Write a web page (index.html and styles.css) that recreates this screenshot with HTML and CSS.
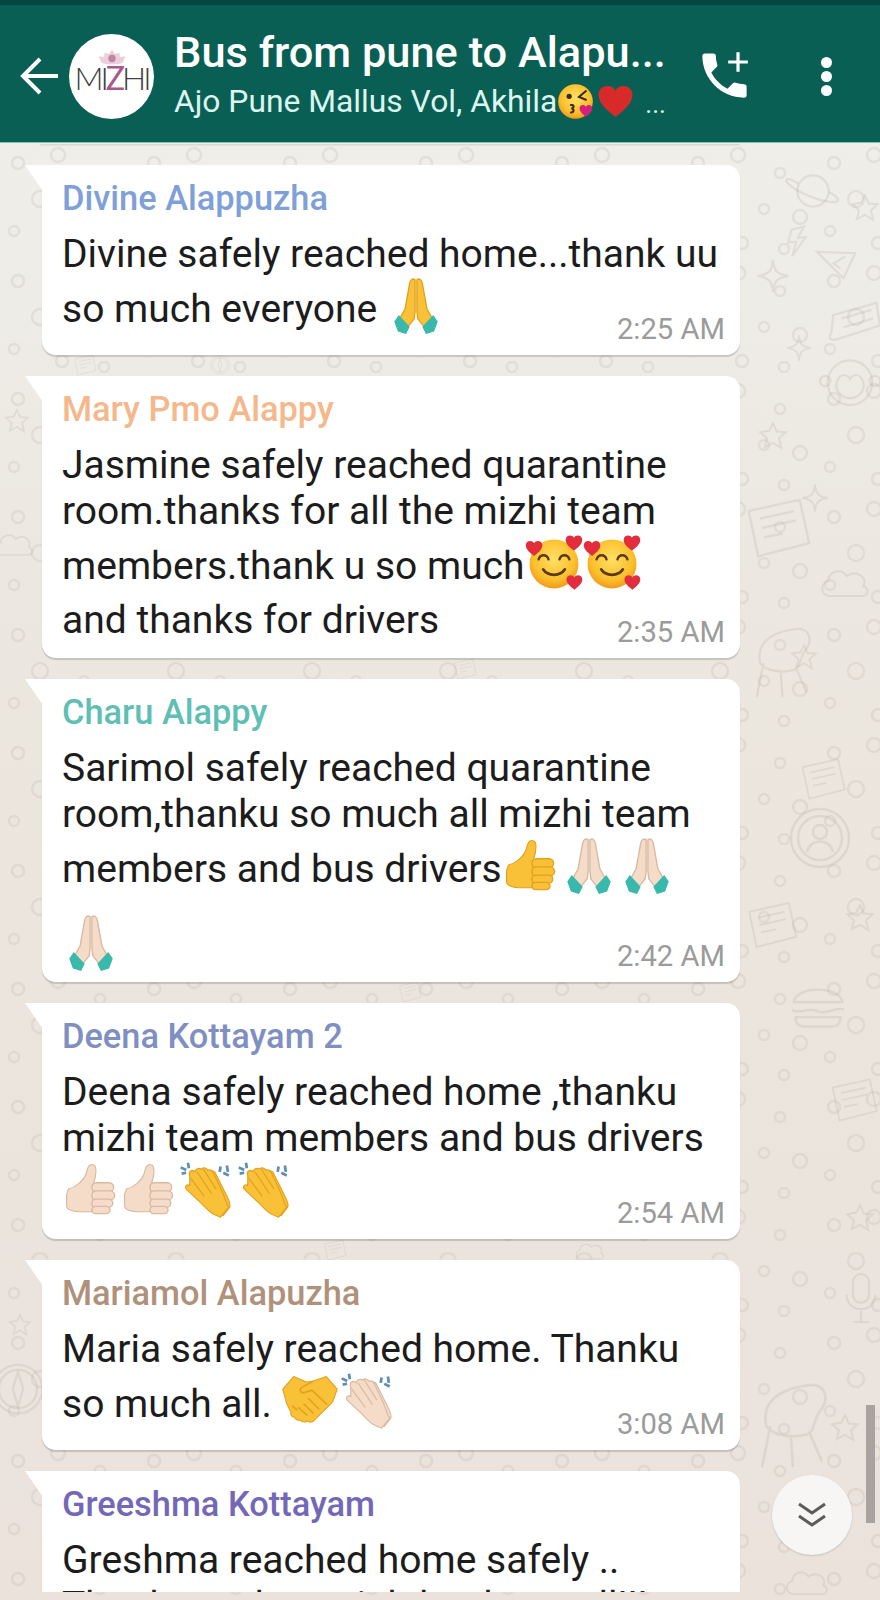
FILE: index.html
```html
<!DOCTYPE html>
<html>
<head>
  <meta charset="UTF-8">
  <title>Bus from pune to Alapu...</title>
  <link rel="stylesheet" href="styles.css">
</head>
<body>
  <svg class="defs" width="0" height="0">
    <defs>
      <radialGradient id="face" cx="50%" cy="40%" r="60%">
        <stop offset="0" stop-color="#ffe066"/>
        <stop offset="0.7" stop-color="#fbc02d"/>
        <stop offset="1" stop-color="#f29a1c"/>
      </radialGradient>
      <symbol id="pray" viewBox="0 0 64 64">
        <path d="M31 3c-3-2-5 0-6 4l-5 28-6 11 9 9 7-9 1-8z" fill="var(--skin)" stroke="var(--line)" stroke-width="1.5"/>
        <path d="M33 3c3-2 5 0 6 4l5 28 6 11-9 9-7-9-1-8z" fill="var(--skin)" stroke="var(--line)" stroke-width="1.5"/>
        <path d="M13 42l12 13-4 8-9-3-4-11z" fill="#38b9ac"/>
        <path d="M51 42L39 55l4 8 9-3 4-11z" fill="#38b9ac"/>
      </symbol>
      <symbol id="thumb" viewBox="0 0 64 64">
        <path d="M7 31c8-2 17-9 20-18 1-6 3-10 7-9 5 1 4 11 1 20l-1 3v29H18c-7-1-13-2-13-7V37z" fill="var(--skin)" stroke="var(--line)" stroke-width="1.2"/>
        <rect x="33" y="24" width="24" height="10" rx="5" fill="var(--skin)" stroke="var(--line)" stroke-width="1.5"/>
        <rect x="33" y="33" width="25" height="10" rx="5" fill="var(--skin)" stroke="var(--line)" stroke-width="1.5"/>
        <rect x="33" y="42" width="23" height="9" rx="4.5" fill="var(--skin)" stroke="var(--line)" stroke-width="1.5"/>
        <rect x="33" y="50" width="20" height="8" rx="4" fill="var(--skin)" stroke="var(--line)" stroke-width="1.5"/>
      </symbol>
      <symbol id="clap" viewBox="0 0 64 64">
        <path d="M3 7l6 3M4 14l5-1M11 2l1 6M47 6l-1 6M54 5l1 7M50 13l6 3" stroke="#5d8fb5" stroke-width="3" fill="none"/>
        <g fill="var(--skin)" stroke="var(--line)" stroke-width="1.3" stroke-linejoin="round">
          <path d="M36 12c3-2 5 0 6 3l12 24c3 6 4 10 3 12l-7 9-11-4-8-14z"/>
          <path d="M13 16c-2-4 2-7 5-5l1 1c0-3 4-5 7-3 1-2 5-2 7 1 3-1 5 1 6 3l9 19c3 7 5 12 6 16l2 3-9 11-7-3c-6-3-10-8-14-12L9 31c-2-3 1-6 4-4z"/>
          <path d="M14 19l15 20M21 12l16 24M28 9l14 22" fill="none"/>
        </g>
      </symbol>
      <symbol id="shake" viewBox="0 0 64 64">
        <path d="M2 19L14 5l14 6 8-1 14-5 12 14-5 14-19 19c-3 4-7 4-9 2-3 2-6 1-8-1-3 1-5-1-6-3-3 0-5-3-4-5L6 34z" fill="var(--skin)" stroke="var(--line)" stroke-width="1.2" stroke-linejoin="round"/>
        <path d="M36 10L23 17c-3 2-2 6 2 6l9-3 17 16M30 29l12 12M25 35l11 11M19 39l10 9M12 37l6 5" fill="none" stroke="var(--line)" stroke-width="1.8"/>
      </symbol>
      <symbol id="hrt" viewBox="0 0 24 24">
        <path d="M12 22C4 16 1 12 1 7.500 1 4 4 2 6.800 2 9 2 11 3 12 5c1-2 3-3 5.200-3C20 2 23 4 23 7.500 23 12 20 16 12 22z"/>
      </symbol>
      <symbol id="hearts" viewBox="0 0 64 64">
        <circle cx="32" cy="33" r="27" fill="url(#face)"/>
        <path d="M15 28c2-6 9-6 11 0M38 28c2-6 9-6 11 0" fill="none" stroke="#5a3a10" stroke-width="2.6" stroke-linecap="round"/>
        <path d="M20 39c5 8 19 8 24 0" fill="none" stroke="#5a3a10" stroke-width="3" stroke-linecap="round"/>
        <use href="#hrt" x="0" y="6" width="20" height="20" fill="#e22d3d"/>
        <use href="#hrt" x="44" y="0" width="20" height="20" fill="#e22d3d"/>
        <use href="#hrt" x="45" y="44" width="19" height="19" fill="#e22d3d"/>
      </symbol>
      <symbol id="kiss" viewBox="0 0 64 64">
        <circle cx="32" cy="32" r="30" fill="url(#face)"/>
        <circle cx="21" cy="23" r="4.500" fill="#3a2a10"/>
        <path d="M50 14L38 24l12 5" fill="none" stroke="#3a2a10" stroke-width="3.500" stroke-linecap="round"/>
        <path d="M24 38c6-1 6 5 1 6 5 1 5 7-1 7" fill="none" stroke="#3a2a10" stroke-width="3.500" stroke-linecap="round"/>
        <use href="#hrt" x="38" y="36" width="24" height="24" fill="#d6207e"/>
      </symbol>
      <pattern id="rings" width="136" height="118" patternUnits="userSpaceOnUse">
        <g fill="none" stroke="#b5aea4" stroke-opacity="0.22" stroke-width="2.5">
          <circle cx="18" cy="20" r="6"/><circle cx="58" cy="12" r="7"/><circle cx="100" cy="30" r="5"/>
          <circle cx="40" cy="56" r="8"/><circle cx="84" cy="66" r="5"/><circle cx="120" cy="74" r="7"/>
          <circle cx="14" cy="88" r="5"/><circle cx="62" cy="100" r="6"/><circle cx="104" cy="106" r="5"/>
        </g>
      </pattern>
      <symbol id="planet" viewBox="0 0 60 50" overflow="visible"><circle cx="30" cy="25" r="17"/><path d="M14 17C2 9 -2 12 3 17c9 9 35 20 50 20 7 0 6-5-6-11"/></symbol>
      <symbol id="star5" viewBox="0 0 40 40" overflow="visible"><path d="M20 3l5 11 12 1-9 8 3 13-11-7-11 6 3-12-9-8 12-2z"/></symbol>
      <symbol id="star4" viewBox="0 0 40 40" overflow="visible"><path d="M20 2c1 12 4 16 17 18-13 2-16 6-17 18-1-12-4-16-17-18 13-2 16-6 17-18z"/></symbol>
      <symbol id="bolt" viewBox="0 0 30 40" overflow="visible"><path d="M8 6l16-4-8 14 10-1-17 24 5-18-10 1z"/></symbol>
      <symbol id="plane" viewBox="0 0 50 36" overflow="visible"><path d="M2 2l46 2-14 30z M36 8L22 16l8 6"/></symbol>
      <symbol id="note" viewBox="0 0 60 44" overflow="visible"><path d="M6 14l50-14 4 26-50 16c-8 2-10-2-6-8z M16 18l34-10M18 28l34-10"/></symbol>
      <symbol id="cloud" viewBox="0 0 60 40" overflow="visible"><path d="M12 38C0 38 0 22 10 20 10 8 26 4 32 14 44 6 58 16 52 26c8 4 6 12-2 12z"/></symbol>
      <symbol id="chair" viewBox="0 0 70 80" overflow="visible"><path d="M6 40C0 10 30 2 50 0c14 0 18 14 8 26-6 8-4 18-12 22-12 4-34 2-40-8z M10 40l-8 40M30 50l2 30M48 46l12 28"/></symbol>
      <symbol id="burger" viewBox="0 0 60 50" overflow="visible"><path d="M4 22C6 4 54 4 56 22z M2 30c10 6 18-4 28 2 10 4 18-6 28-2M6 38h48c0 8-4 10-10 10H16c-6 0-10-2-10-10z"/></symbol>
      <symbol id="user" viewBox="0 0 60 60" overflow="visible"><circle cx="30" cy="30" r="29"/><circle cx="30" cy="30" r="22"/><circle cx="30" cy="24" r="7"/><path d="M17 44c3-14 23-14 26 0"/></symbol>
      <symbol id="paper" viewBox="0 0 70 60" overflow="visible"><path d="M4 12L58 0l10 46-54 14z M16 20l36-8M18 30l36-8M20 40l20-4"/></symbol>
      <symbol id="mic" viewBox="0 0 40 60" overflow="visible"><rect x="10" y="0" width="20" height="36" rx="10"/><path d="M2 26c0 24 36 24 36 0M20 46v14M10 60h20"/></symbol>
      <symbol id="compass" viewBox="0 0 60 60" overflow="visible"><circle cx="30" cy="30" r="28"/><circle cx="30" cy="30" r="22"/><path d="M30 10l6 20-6 20-6-20z"/></symbol>
      <symbol id="monkey" viewBox="0 0 70 60" overflow="visible"><circle cx="35" cy="32" r="26"/><circle cx="6" cy="30" r="6"/><circle cx="64" cy="30" r="6"/><path d="M20 30c4-10 12-8 15-2 3-6 11-8 15 2 4 12-6 20-15 20s-19-8-15-20z"/></symbol>
    </defs>
  </svg>

  <header class="topbar">
    <svg class="back" viewBox="0 0 40 40"><path d="M38 20H5M20 3L3 20l17 17" fill="none" stroke="#fff" stroke-width="4"/></svg>
    <div class="avatar">
      <svg class="lotus" viewBox="0 0 40 26"><path d="M20 1l4 6 6-2 1 6 7-1-3 8c-3 4-26 4-30 0L2 10l7 1 1-6 6 2z" fill="#e6c4d2"/><circle cx="20" cy="13" r="5" fill="#b2668c"/></svg>
      <div class="logo">MI<b>Z</b>HI</div>
    </div>
    <div class="titles">
      <div class="title">Bus from pune to Alapu...</div>
      <div class="subtitle">Ajo Pune Mallus Vol, Akhila<svg class="sub-emoji"><use href="#kiss"/></svg><svg class="sub-emoji heart"><use href="#hrt" fill="#d92a2a"/></svg><span class="more">...</span></div>
    </div>
    <svg class="call" viewBox="0 0 24 24"><path d="M6.620 10.790c1.440 2.830 3.760 5.140 6.590 6.590l2.200-2.200c.27-.27.67-.36 1.020-.24 1.120.37 2.330.57 3.570.57.55 0 1 .45 1 1V20c0 .55-.45 1-1 1-9.390 0-17-7.610-17-17 0-.55.45-1 1-1h3.500c.55 0 1 .45 1 1 0 1.250.2 2.450.57 3.570.11.35.03.74-.25 1.020l-2.200 2.200z" fill="#fff"/><path d="M13.500 6.500h8M17.500 2.500v8" stroke="#fff" stroke-width="1.300"/></svg>
    <div class="dots"><i></i><i></i><i></i></div>
  </header>

  <main class="chat">
    <svg class="doodles" width="880" height="1457">
      <rect width="880" height="1457" fill="url(#rings)" stroke="none"/>
      <use href="#planet" x="785" y="25" width="56" height="46"/>
      <use href="#star5" x="850" y="50" width="30" height="30"/>
      <use href="#bolt" x="785" y="80" width="24" height="36"/>
      <use href="#plane" x="815" y="107" width="42" height="30"/>
      <use href="#star4" x="755" y="115" width="36" height="36"/>
      <use href="#note" x="828" y="155" width="52" height="48"/>
      <use href="#star4" x="785" y="190" width="28" height="30"/>
      <use href="#monkey" x="820" y="208" width="60" height="60"/>
      <use href="#star5" x="758" y="278" width="30" height="30"/>
      <use href="#paper" x="745" y="355" width="66" height="60"/>
      <use href="#star4" x="800" y="340" width="30" height="30"/>
      <use href="#cloud" x="820" y="420" width="50" height="36"/>
      <use href="#star5" x="790" y="500" width="28" height="28"/>
      <use href="#chair" x="755" y="480" width="60" height="80"/>
      <use href="#paper" x="800" y="615" width="46" height="42"/>
      <use href="#user" x="790" y="665" width="60" height="60"/>
      <use href="#paper" x="742" y="760" width="60" height="44"/>
      <use href="#burger" x="790" y="835" width="56" height="54"/>
      <use href="#star5" x="845" y="760" width="30" height="30"/>
      <use href="#paper" x="830" y="935" width="48" height="44"/>
      <use href="#star5" x="845" y="1060" width="30" height="30"/>
      <use href="#mic" x="845" y="1125" width="32" height="60"/>
      <use href="#chair" x="760" y="1235" width="72" height="96"/>
      <use href="#star5" x="830" y="1270" width="30" height="30"/>
      <use href="#cloud" x="785" y="1420" width="44" height="36"/>
      <use href="#compass" x="-8" y="1220" width="52" height="52"/>
      <use href="#cloud" x="-6" y="380" width="40" height="40"/>
      <use href="#star5" x="4" y="265" width="26" height="26"/>
      <use href="#star5" x="8" y="1170" width="24" height="24"/>
      <use href="#paper" x="50" y="212" width="70" height="20"/>
      <use href="#paper" x="430" y="516" width="70" height="20"/>
      <use href="#compass" x="210" y="212" width="20" height="20"/>
      <use href="#paper" x="380" y="839" width="60" height="20"/>
      <use href="#paper" x="300" y="1097" width="70" height="20"/>
      <use href="#cloud" x="560" y="1097" width="60" height="20"/>
    </svg>

    <div class="list">
      <div class="edge"></div>

      <article class="bubble">
        <div class="name blue">Divine Alappuzha</div>
        <p class="msg">Divine safely reached home...thank uu<br>so much everyone <svg class="emoji yellow"><use href="#pray"/></svg></p>
        <time>2:25 AM</time>
      </article>

      <article class="bubble">
        <div class="name peach">Mary Pmo Alappy</div>
        <p class="msg">Jasmine safely reached quarantine<br>room.thanks for all the mizhi team<br>members.thank u so much<svg class="emoji"><use href="#hearts"/></svg><svg class="emoji"><use href="#hearts"/></svg><br>and thanks for drivers</p>
        <time>2:35 AM</time>
      </article>

      <article class="bubble tight">
        <div class="name teal">Charu Alappy</div>
        <p class="msg">Sarimol safely reached quarantine<br>room,thanku so much all mizhi team<br>members and bus drivers<svg class="emoji yellow"><use href="#thumb"/></svg><svg class="emoji light"><use href="#pray"/></svg><svg class="emoji light"><use href="#pray"/></svg><br><svg class="emoji light alone"><use href="#pray"/></svg></p>
        <time>2:42 AM</time>
      </article>

      <article class="bubble">
        <div class="name slate">Deena Kottayam 2</div>
        <p class="msg">Deena safely reached home ,thanku<br>mizhi team members and bus drivers<br><svg class="emoji light"><use href="#thumb"/></svg><svg class="emoji light"><use href="#thumb"/></svg><svg class="emoji yellow"><use href="#clap"/></svg><svg class="emoji yellow"><use href="#clap"/></svg></p>
        <time>2:54 AM</time>
      </article>

      <article class="bubble">
        <div class="name brown">Mariamol Alapuzha</div>
        <p class="msg">Maria safely reached home. Thanku<br>so much all. <svg class="emoji yellow"><use href="#shake"/></svg><svg class="emoji light"><use href="#clap"/></svg></p>
        <time>3:08 AM</time>
      </article>

      <article class="bubble">
        <div class="name purple">Greeshma Kottayam</div>
        <p class="msg">Greshma reached home safely ..<br>Thanks and special thanks to all!!! everyone</p>
      </article>
    </div>

    <div class="scrollbar"></div>
    <button class="jump">
      <svg viewBox="0 0 30 26"><path d="M2 2l13 9 13-9M2 14l13 9 13-9" fill="none" stroke="#5c5c5c" stroke-width="3"/></svg>
    </button>
  </main>
</body>
</html>
```

FILE: styles.css
```css
body {
  margin: 0;
  height: 1600px;
  overflow: hidden;
  font-family: Roboto, "Liberation Sans", sans-serif;
  background: #ebe3dd;
}

.defs {
  position: absolute;
}

.yellow {
  --skin: #f9c137;
  --line: #e5a01e;
}

.light {
  --skin: #f5dcc9;
  --line: #d9b9a1;
}

/* top bar */
.topbar {
  display: flex;
  align-items: center;
  box-sizing: border-box;
  height: 143px;
  padding: 5px 0 0 20px;
  background: #0a5f55;
  border-top: 5px solid #06483f;
  border-bottom: 1px solid #7fc4b5;
}

.back {
  width: 40px;
  height: 40px;
  flex: none;
}

.avatar {
  display: flex;
  flex-direction: column;
  align-items: center;
  flex: none;
  width: 85px;
  height: 85px;
  margin: 0 20px 0 9px;
  border-radius: 50%;
  background: #fff;
  overflow: hidden;
}

.lotus {
  flex: none;
  width: 34px;
  height: 19px;
  margin-top: 15px;
  opacity: 0.8;
}

.logo {
  margin-top: -7px;
  font-family: Lato, sans-serif;
  font-weight: 300;
  font-size: 32px;
  line-height: 34px;
  color: #3f3f3f;
  letter-spacing: -3px;
  white-space: nowrap;
}

.logo b {
  font-weight: 400;
  color: #a8588a;
}

.titles {
  width: 494px;
  flex: none;
  color: #fff;
  white-space: nowrap;
}

.title {
  font-size: 43.4px;
  font-weight: 500;
  line-height: 50px;
}

.subtitle {
  display: flex;
  align-items: center;
  height: 46px;
  font-size: 31.8px;
  color: #dcf5ee;
}

.sub-emoji {
  width: 37px;
  height: 37px;
  flex: none;
}

.heart {
  margin-left: 3px;
}

.more {
  margin-left: 11px;
  font-size: 26px;
  padding-top: 6px;
}

.call {
  width: 59px;
  height: 59px;
  flex: none;
  margin-left: 27px;
  margin-top: -2px;
}

.dots {
  display: flex;
  flex-direction: column;
  gap: 3px;
  margin-left: 67px;
}

.dots i {
  width: 11px;
  height: 11px;
  border-radius: 50%;
  background: #fff;
}

/* messages */
.chat {
  position: relative;
  height: 1457px;
  overflow: hidden;
  background: linear-gradient(#efeee9, #ebe6de 40%, #ebe2dc);
}

.doodles {
  position: absolute;
  top: 0;
  left: 0;
  fill: none;
  stroke: #b5aea4;
  stroke-opacity: 0.26;
  stroke-width: 2.5;
}

.list {
  position: relative;
  display: flex;
  flex-direction: column;
  height: 1449px;
  overflow: hidden;
}

.edge {
  width: 700px;
  height: 1px;
  flex: none;
  margin-left: 40px;
  box-shadow: 0 1px 2px rgba(0, 0, 0, 0.2);
}

.bubble {
  position: relative;
  box-sizing: border-box;
  flex: none;
  width: 698px;
  margin: 21px 0 0 42px;
  padding: 13px 14px 15px 20px;
  background: #fff;
  border-radius: 0 14px 14px 14px;
  box-shadow: 0 2px 1px rgba(0, 0, 0, 0.16);
}

.bubble.tight {
  padding-bottom: 5px;
}

.bubble::before {
  content: "";
  position: absolute;
  top: 0;
  left: -17px;
  width: 18px;
  height: 26px;
  background: #fff;
  clip-path: polygon(0 0, 100% 0, 100% 100%);
}

.name {
  font-size: 34.4px;
  font-weight: 500;
  line-height: 40px;
}

.blue { color: #7f9fd9; }
.peach { color: #f5b78c; }
.teal { color: #5fbfb4; }
.slate { color: #7f8fc2; }
.brown { color: #b0917b; }
.purple { color: #7468b6; }

.msg {
  margin: 13px 0 0;
  font-size: 39px;
  line-height: 46px;
  color: #1c1c1c;
  white-space: nowrap;
}

.emoji {
  width: 58px;
  height: 58px;
  margin: 0 0 5px;
  vertical-align: -18px;
}

.emoji.alone {
  margin-top: 14px;
}

time {
  position: absolute;
  right: 15px;
  bottom: 9px;
  font-size: 29.2px;
  line-height: 34px;
  color: #9b9b9b;
}

.scrollbar {
  position: absolute;
  top: 1262px;
  right: 5px;
  width: 9px;
  height: 118px;
  background: #a8a39e;
}

.jump {
  position: absolute;
  top: 1332px;
  left: 772px;
  display: flex;
  align-items: center;
  justify-content: center;
  width: 80px;
  height: 80px;
  padding: 0;
  border: none;
  border-radius: 50%;
  background: #f8f6f4;
  box-shadow: 0 1px 2px rgba(0, 0, 0, 0.15);
}

.jump svg {
  width: 30px;
  height: 26px;
}
```
